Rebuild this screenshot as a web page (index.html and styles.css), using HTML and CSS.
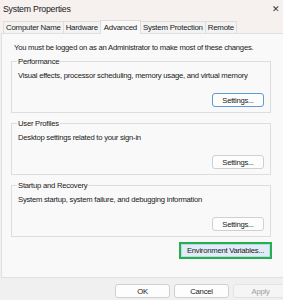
FILE: index.html
```html
<!DOCTYPE html>
<html lang="en">
<head>
    <meta charset="UTF-8">
    <title>System Properties</title>
    <link rel="stylesheet" href="styles.css">
</head>
<body>
    <div class="window">
        <div class="titlebar">
            <span class="title">System Properties</span>
            <span class="close">&#x2715;</span>
        </div>
        <div class="tabs">
            <div class="tab">Computer Name</div>
            <div class="tab">Hardware</div>
            <div class="tab active">Advanced</div>
            <div class="tab">System Protection</div>
            <div class="tab">Remote</div>
        </div>
        <div class="panel">
            <p class="note">You must be logged on as an Administrator to make most of these changes.</p>

            <fieldset class="group">
                <legend>Performance</legend>
                <p class="desc">Visual effects, processor scheduling, memory usage, and virtual memory</p>
                <div class="actions">
                    <button class="btn focused">Settings...</button>
                </div>
            </fieldset>

            <fieldset class="group">
                <legend>User Profiles</legend>
                <p class="desc">Desktop settings related to your sign-in</p>
                <div class="actions">
                    <button class="btn">Settings...</button>
                </div>
            </fieldset>

            <fieldset class="group">
                <legend>Startup and Recovery</legend>
                <p class="desc">System startup, system failure, and debugging information</p>
                <div class="actions">
                    <button class="btn">Settings...</button>
                </div>
            </fieldset>

            <div class="env-row">
                <div class="highlight">
                    <button class="btn env">Environment Variables...</button>
                </div>
            </div>
        </div>
        <div class="footer">
            <button class="btn dlg">OK</button>
            <button class="btn dlg">Cancel</button>
            <button class="btn dlg" disabled>Apply</button>
        </div>
    </div>
</body>
</html>
```
FILE: styles.css
```css
body {
    margin: 0;
    overflow: hidden;
    font-family: "Liberation Sans", Arial, sans-serif;
    font-size: 7.7px;
    line-height: 9px;
    color: #1a1a1a;
    background-color: #f0f0f0;
}
.window {
    width: 292px;
    height: 300px;
    display: flex;
    flex-direction: column;
    background-color: #f0f0f0;
}
.titlebar {
    height: 16px;
    flex-shrink: 0;
    display: flex;
    align-items: center;
    justify-content: space-between;
    padding: 0 0 0 3px;
    background-color: #f6f0ef;
}
.title {
    font-size: 8.8px;
    letter-spacing: -0.25px;
    margin-top: 2px;
}
.close {
    font-size: 9px;
    margin-right: 12px;
    margin-top: 2px;
    color: #333;
}
.tabs {
    height: 17px;
    flex-shrink: 0;
    display: flex;
    align-items: flex-end;
    padding-left: 3px;
    background-color: #f6f0ef;
}
.tab {
    height: 11px;
    line-height: 11px;
    font-size: 7.9px;
    padding: 0 2px;
    border: 1px solid #e2dcdb;
    border-bottom: none;
    background-color: #f3f3f3;
    letter-spacing: -0.25px;
    margin-right: -1px;
}
.tab.active {
    height: 13px;
    line-height: 13px;
    background-color: #f9f9f9;
    border-color: #dcdcdc;
    position: relative;
    z-index: 1;
    margin-bottom: -1px;
    padding: 0 3px;
}
.panel {
    height: 243px;
    flex-shrink: 0;
    margin-left: 1px;
    border: 1px solid #e0e0e0;
    background-color: #f9f9f9;
    padding: 0 20px 0 9px;
}
.note {
    margin: 9px 0 5px 3px;
    letter-spacing: -0.25px;
}
.group {
    margin: 0 0 6px 0;
    padding: 0 6px 5px 6px;
    border: 1px solid #dddddd;
}
.group legend {
    padding: 0 1px;
    margin-left: -1px;
    letter-spacing: -0.25px;
}
.desc {
    margin: 5px 0 0 0;
    letter-spacing: -0.25px;
}
.actions {
    margin-top: 13px;
    display: flex;
    justify-content: flex-end;
}
.btn {
    font-family: "Liberation Sans", Arial, sans-serif;
    font-size: 7.7px;
    letter-spacing: -0.25px;
    color: #1a1a1a;
    background-color: #fdfdfd;
    border: 1px solid #d0d0d0;
    border-radius: 3px;
    height: 14px;
    width: 52px;
    padding: 0;
}
.btn.focused {
    border-color: #5d9bd9;
}
.env-row {
    display: flex;
    justify-content: flex-end;
    margin-top: -1px;
}
.highlight {
    border: 2px solid #22b14c;
    margin-right: -1px;
}
.btn.env {
    width: 89px;
    height: 13px;
    border-radius: 0;
    border-color: #c4d7ea;
    background-color: #e0ecf8;
}
.footer {
    display: flex;
    gap: 4px;
    padding: 6px 0 0 115px;
}
.btn.dlg {
    width: 55px;
}
.btn.dlg:disabled {
    color: #a0a0a0;
    background-color: #f5f5f5;
    border-color: #e3e3e3;
}
```
